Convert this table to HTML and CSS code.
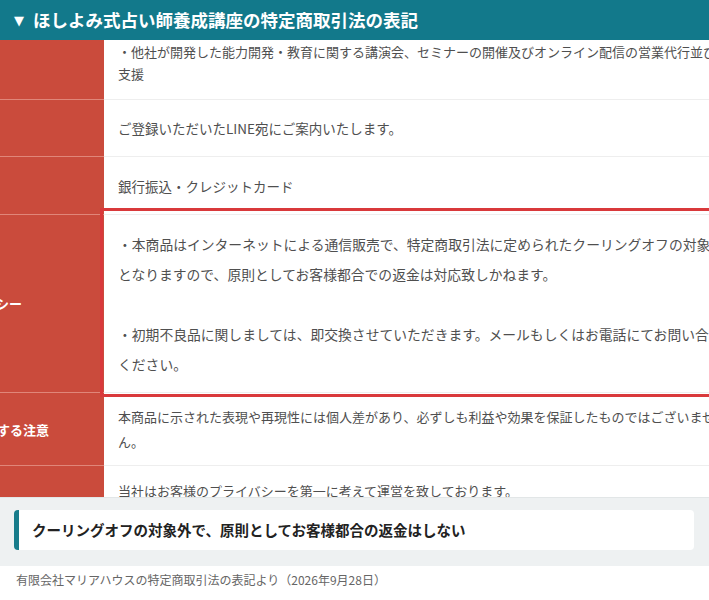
FILE: index.html
```html
<!DOCTYPE html>
<html lang="ja">
<head>
<meta charset="utf-8">
<title>特定商取引法の表記</title>
<link rel="stylesheet" href="styles.css">
</head>
<body>
<div class="shot">
  <div class="title"><span class="arrow">▼</span>ほしよみ式占い師養成講座の特定商取引法の表記</div>
  <div class="table">
    <div class="row r1">
      <div class="th"></div>
      <div class="td t13">・他社が開発した能力開発・教育に関する講演会、セミナーの開催及びオンライン配信の営業代行並びに<br>支援</div>
    </div>
    <div class="row r2">
      <div class="th"></div>
      <div class="td">ご登録いただいたLINE宛にご案内いたします。</div>
    </div>
    <div class="row r3">
      <div class="th"></div>
      <div class="td">銀行振込・クレジットカード</div>
    </div>
    <div class="row r4">
      <div class="th"><span class="label l4">返品・キャンセルポリシー</span></div>
      <div class="td t14">・本商品はインターネットによる通信販売で、特定商取引法に定められたクーリングオフの対象外<br>となりますので、原則としてお客様都合での返金は対応致しかねます。<br><br>・初期不良品に関しましては、即交換させていただきます。メールもしくはお電話にてお問い合わせ<br>ください。</div>
    </div>
    <div class="row r5">
      <div class="th"><span class="label l5">表現及び商品の効果に関する注意</span></div>
      <div class="td t13">本商品に示された表現や再現性には個人差があり、必ずしも利益や効果を保証したものではございませ<br>ん。</div>
    </div>
    <div class="row r6">
      <div class="th"></div>
      <div class="td t13">当社はお客様のプライバシーを第一に考えて運営を致しております。</div>
    </div>
    <div class="highlight"></div>
  </div>
</div>
<div class="note">
  <div class="callout">クーリングオフの対象外で、原則としてお客様都合の返金はしない</div>
</div>
<p class="source">有限会社マリアハウスの特定商取引法の表記より（2026年9月28日）</p>
</body>
</html>
```

FILE: styles.css
```css
html, body {
  margin: 0;
  padding: 0;
  background: #ffffff;
  font-family: "Noto Sans CJK JP", "Noto Sans", sans-serif;
}

.shot {
  height: 497px;
  overflow: hidden;
}

.title {
  height: 40px;
  line-height: 40px;
  background: #12798b;
  color: #ffffff;
  font-weight: 700;
  font-size: 17.5px;
  padding-left: 14px;
  white-space: nowrap;
  overflow: hidden;
}

.arrow {
  font-family: "DejaVu Sans", sans-serif;
  font-size: 13px;
  margin-right: 9px;
  position: relative;
  top: -2px;
}

.table {
  position: relative;
}

.row {
  display: grid;
  grid-template-columns: 104px 1fr;
}

.th {
  background: #ca4b3c;
  border-bottom: 1px solid #e08679;
  overflow: hidden;
  display: flex;
  align-items: center;
}

.td {
  border-bottom: 1px solid #eeeeee;
  padding-left: 14px;
  color: #4f4f4f;
  font-size: 13.5px;
  white-space: nowrap;
  overflow: hidden;
  display: flex;
  align-items: center;
}

.t13 { font-size: 13px; }
.t14 { font-size: 13.8px; }

.label {
  color: #ffffff;
  font-weight: 700;
  font-size: 13px;
  white-space: nowrap;
  margin-left: -134px;
}

.l5 { margin-left: -146px; }

.r1 { height: 60px; }
.r1 .td { align-items: flex-start; line-height: 22px; padding-top: 1px; box-sizing: border-box; }
.r2 { height: 57px; }
.r3 { height: 58px; }
.r4 { height: 178px; }
.r4 .td { line-height: 30px; }
.r5 { height: 73px; }
.r5 .td { line-height: 25px; }
.r6 { height: 50px; }

.highlight {
  position: absolute;
  top: 168px;
  left: 100px;
  right: -10px;
  height: 189px;
  box-sizing: border-box;
  border: 3px solid #d9393b;
}

.note {
  background: #eef1f2;
  border-top: 1px solid #e2e6e7;
  padding: 12px 15px 16px 14px;
}

.callout {
  background: #ffffff;
  border-left: 5px solid #177c8b;
  border-radius: 4px;
  height: 40px;
  line-height: 40px;
  padding-left: 13px;
  font-weight: 700;
  font-size: 14.5px;
  color: #222222;
  white-space: nowrap;
}

.source {
  margin: 0;
  padding: 5px 16px;
  font-size: 12px;
  line-height: 18px;
  color: #666666;
}
```
